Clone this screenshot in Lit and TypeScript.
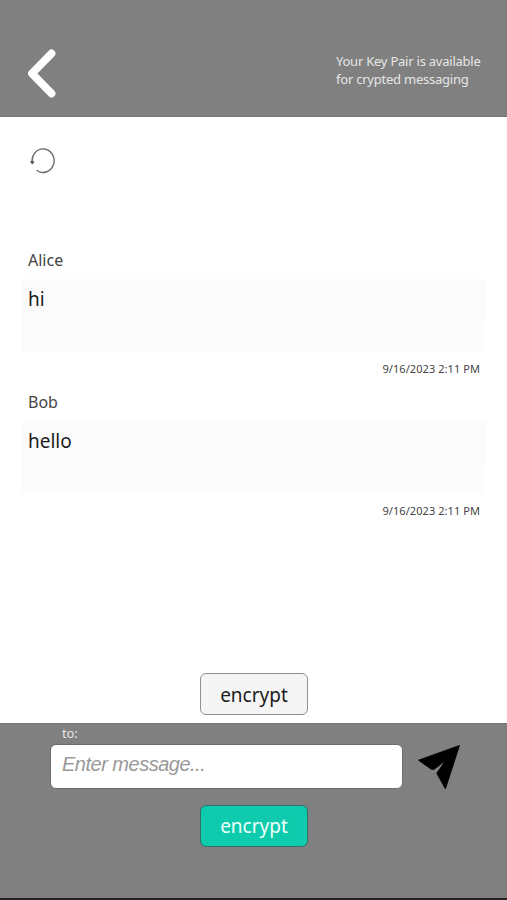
import { LitElement, html, css } from "lit";
import { customElement, property, state } from "lit/decorators.js";

interface Message {
  author: string;
  text: string;
  time: string;
}

@customElement("chat-message")
class ChatMessage extends LitElement {
  @property() author = "";
  @property() text = "";
  @property() time = "";

  static styles = css`
    :host {
      display: block;
      height: 142px;
      padding: 0 22px;
      box-sizing: border-box;
    }
    .author {
      height: 31px;
      padding-left: 6px;
      font-size: 16px;
      line-height: 24px;
      color: #444;
    }
    .bubble {
      height: 73px;
      padding: 5px 6px 0;
      box-sizing: border-box;
      background: linear-gradient(#fbfbfb 43px, #fcfcfc 43px);
      font-size: 19px;
      line-height: 30px;
      color: #1c1c1c;
    }
    .time {
      padding: 9px 5px 0 0;
      text-align: right;
      font-size: 11px;
      line-height: 16px;
      letter-spacing: 0.07px;
      color: #444;
    }
  `;

  render() {
    return html`
      <div class="author">${this.author}</div>
      <div class="bubble">${this.text}</div>
      <div class="time">${this.time}</div>
    `;
  }
}

@customElement("app-root")
class AppRoot extends LitElement {
  @state() messages: Message[] = [
    { author: "Alice", text: "hi", time: "9/16/2023 2:11 PM" },
    { author: "Bob", text: "hello", time: "9/16/2023 2:11 PM" },
  ];

  static styles = css`
    :host {
      display: flex;
      flex-direction: column;
      width: 507px;
      height: 900px;
      overflow: hidden;
      background: #fff;
      font-family: "Noto Sans", "Open Sans", sans-serif;
    }
    svg {
      display: block;
    }
    .header {
      display: flex;
      justify-content: space-between;
      height: 117px;
      padding: 46px 0 0 24px;
      box-sizing: border-box;
      background: #808080;
      border-bottom: 1px solid #747474;
    }
    .status {
      width: 171px;
      padding-top: 6px;
      font-size: 13px;
      line-height: 18px;
      letter-spacing: -0.23px;
      white-space: pre-line;
      color: #e6e6e6;
    }
    .body {
      flex: 1;
      display: flex;
      flex-direction: column;
    }
    .reload {
      margin: 30px 0 0 28px;
    }
    .messages {
      margin-top: 73px;
    }
    .button {
      width: 108px;
      height: 42px;
      padding: 0;
      box-sizing: border-box;
      border: 1.5px solid #909090;
      border-radius: 6px;
      background: #f5f5f5;
      font: inherit;
      font-size: 19px;
      color: #1c1c1c;
    }
    .body .button {
      padding-top: 1px;
      margin: auto 0 8px 200px;
    }
    .footer {
      height: 177px;
      box-sizing: border-box;
      background: #808080;
      border-top: 1px solid #747474;
      border-bottom: 2px solid #262223;
    }
    .to {
      height: 20px;
      padding-left: 62px;
      font-size: 13px;
      line-height: 19px;
      letter-spacing: -0.2px;
      color: #e6e6e6;
    }
    .compose {
      display: flex;
      gap: 14px;
      padding-left: 50px;
    }
    .input {
      width: 353px;
      height: 45px;
      padding: 0 0 5px 11px;
      box-sizing: border-box;
      border: 1px solid #6c6c6c;
      border-radius: 6px;
      background: #fff;
      font: italic 20px "Liberation Sans", sans-serif;
      letter-spacing: -0.5px;
      outline: none;
    }
    .input::placeholder {
      color: #999;
      opacity: 1;
    }
    .footer .button {
      margin: 15px 0 0 200px;
      border-color: #2f7068;
      background: #0fcbae;
      color: #f0fffc;
    }
  `;

  render() {
    return html`
      <div class="header">
        <svg width="36" height="56" viewBox="0 0 36 56">
          <path d="M27.5 7.5 8 27.5 27.5 47.5" fill="none" stroke="#fff" stroke-width="7.8"
            stroke-linecap="round" stroke-linejoin="round" />
        </svg>
        <div class="status">Your Key Pair is available
for crypted messaging</div>
      </div>
      <div class="body">
        <svg class="reload" width="28" height="28" viewBox="0 0 28 28">
          <path d="M4.2 15.2A11 11.8 0 1 1 8.6 23.2" fill="none" stroke="#6a6a6a" stroke-width="1.4" />
          <path d="M1.8 14.8 4.2 13.4 6.6 14.8 4.4 17.6z" fill="#5c5c5c" />
        </svg>
        <div class="messages">
          ${this.messages.map(
            (m) => html`<chat-message .author=${m.author} .text=${m.text} .time=${m.time}></chat-message>`
          )}
        </div>
        <button class="button">encrypt</button>
      </div>
      <div class="footer">
        <div class="to">to:</div>
        <div class="compose">
          <input class="input" placeholder="Enter message..." />
          <svg width="44" height="46" viewBox="0 0 44 46">
            <path d="M1.6 16.2 42.4 1.6 28.4 44.8 19.8 29.2Q25.6 21.6 28.2 16 22.6 21.6 16.6 25.6L14 25z" fill="#000"
              stroke="#000" stroke-width="1" stroke-linejoin="round" />
          </svg>
        </div>
        <button class="button">encrypt</button>
      </div>
    `;
  }
}
